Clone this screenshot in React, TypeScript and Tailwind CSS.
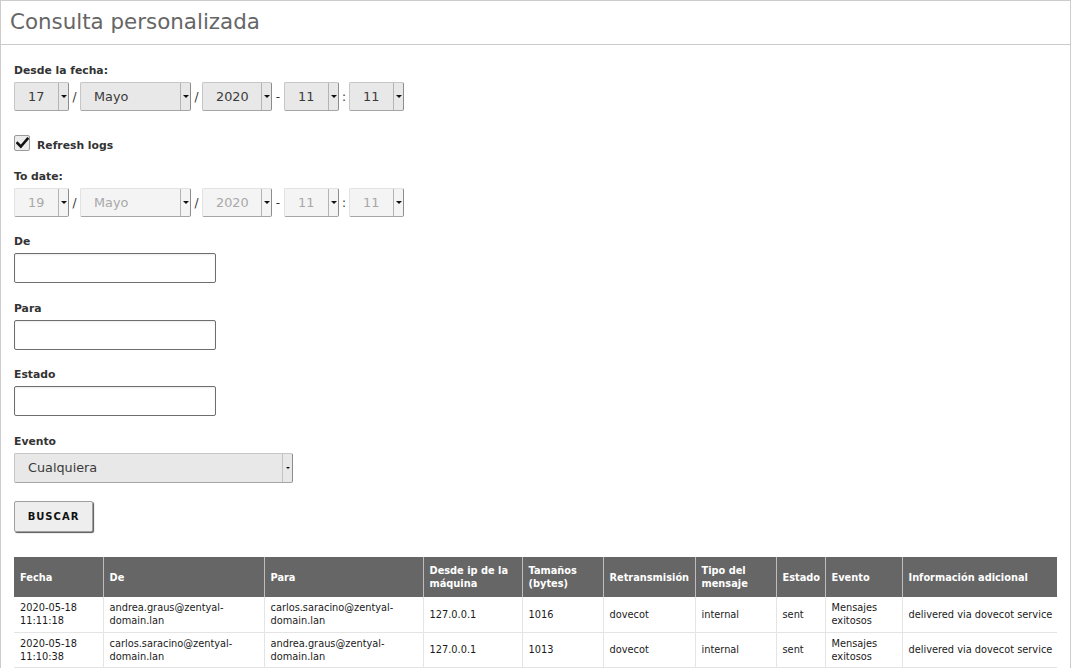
import clsx from "clsx";

type Row = {
  fecha: [string, string];
  de: [string, string];
  para: [string, string];
  ip: string;
  size: string;
  relay: string;
  tipo: string;
  estado: string;
  evento: [string, string];
  info: string;
};

const rows: Row[] = [
  {
    fecha: ["2020-05-18", "11:11:18"],
    de: ["andrea.graus@zentyal-", "domain.lan"],
    para: ["carlos.saracino@zentyal-", "domain.lan"],
    ip: "127.0.0.1",
    size: "1016",
    relay: "dovecot",
    tipo: "internal",
    estado: "sent",
    evento: ["Mensajes", "exitosos"],
    info: "delivered via dovecot service",
  },
  {
    fecha: ["2020-05-18", "11:10:38"],
    de: ["carlos.saracino@zentyal-", "domain.lan"],
    para: ["andrea.graus@zentyal-", "domain.lan"],
    ip: "127.0.0.1",
    size: "1013",
    relay: "dovecot",
    tipo: "internal",
    estado: "sent",
    evento: ["Mensajes", "exitosos"],
    info: "delivered via dovecot service",
  },
];

function Arrow() {
  return (
    <span className="h-0 w-0 border-x-[3px] border-t-[3px] border-x-transparent border-t-[#111]" />
  );
}

function FakeSelect({
  value,
  className,
  disabled,
}: {
  value: string;
  className: string;
  disabled?: boolean;
}) {
  return (
    <div
      className={clsx(
        "flex h-[29px] rounded-[2px] border border-r-[#8c8c8c] border-b-[#a5a5a5]",
        disabled
          ? "border-[#e2e2e2] bg-[#f4f4f4] text-[#a8a8a8]"
          : "border-[#c6c6c6] bg-[#e8e8e8] text-[#3a3a3a]",
        className
      )}
    >
      <div className="flex flex-1 items-center pl-[13px] text-[12.8px]">
        {value}
      </div>
      <div className="flex w-[10px] items-center justify-center border-l border-[#b4b4b4]">
        <Arrow />
      </div>
    </div>
  );
}

function DateRow({ day, disabled }: { day: string; disabled?: boolean }) {
  const sep = "flex items-center justify-center text-[12px] text-[#333]";
  return (
    <div className="flex">
      <FakeSelect value={day} className="w-[55px]" disabled={disabled} />
      <span className={clsx(sep, "w-[11px]")}>/</span>
      <FakeSelect value="Mayo" className="w-[111px]" disabled={disabled} />
      <span className={clsx(sep, "w-[11px]")}>/</span>
      <FakeSelect value="2020" className="w-[70px]" disabled={disabled} />
      <span className={clsx(sep, "w-[12px]")}>-</span>
      <FakeSelect value="11" className="w-[55px]" disabled={disabled} />
      <span className={clsx(sep, "w-[10px]")}>:</span>
      <FakeSelect value="11" className="w-[55px]" disabled={disabled} />
    </div>
  );
}

function Label({ children }: { children: string }) {
  return (
    <div className="mb-[5px] text-[10.8px] font-bold leading-[13px] text-[#333]">
      {children}
    </div>
  );
}

function TextBox() {
  return (
    <div className="h-[30px] w-[202px] rounded-[2px] border border-[#6e6e6e] bg-white shadow-[inset_0_1px_2px_rgba(0,0,0,0.08)]" />
  );
}

export default function App() {
  const headers = [
    "Fecha",
    "De",
    "Para",
    "Desde ip de la máquina",
    "Tamaños (bytes)",
    "Retransmisión",
    "Tipo del mensaje",
    "Estado",
    "Evento",
    "Información adicional",
  ];
  const widths = [
    "w-[89px]",
    "w-[161px]",
    "w-[159px]",
    "w-[99px]",
    "w-[81px]",
    "w-[92px]",
    "w-[81px]",
    "w-[49px]",
    "w-[77px]",
    "w-[155px]",
  ];

  return (
    <div className="min-h-[668px] w-[1071px] bg-white font-['DejaVu_Sans',sans-serif]">
      <div className="min-h-[668px] border border-b-0 border-[#cccccc]">
        <div className="flex h-[44px] items-center border-b border-[#cccccc] px-[9px] text-[21.4px] text-[#666666]">
          Consulta personalizada
        </div>

        <div className="px-[13px]">
          <div className="mt-[19px]">
            <Label>Desde la fecha:</Label>
            <DateRow day="17" />
          </div>

          <div className="mt-[23px] flex h-[17px] items-center gap-[7px]">
            <span className="flex h-[16px] w-[16px] items-center justify-center rounded-[2px] border border-[#9a9a9a] bg-[#ececec]">
              <svg width="13" height="12" viewBox="0 0 13 12">
                <path
                  d="M1.5 6.2 L4.8 9.5 L11.5 1.8"
                  fill="none"
                  stroke="#111"
                  strokeWidth="2.6"
                  strokeLinecap="square"
                />
              </svg>
            </span>
            <span className="mt-[8px] text-[10.8px] font-bold text-[#333]">
              Refresh logs
            </span>
          </div>

          <div className="mt-[19px]">
            <Label>To date:</Label>
            <DateRow day="19" disabled />
          </div>

          <div className="mt-[18px]">
            <Label>De</Label>
            <TextBox />
          </div>
          <div className="mt-[19px]">
            <Label>Para</Label>
            <TextBox />
          </div>
          <div className="mt-[18px]">
            <Label>Estado</Label>
            <TextBox />
          </div>
          <div className="mt-[19px]">
            <Label>Evento</Label>
            <div className="flex h-[30px] w-[279px] rounded-[2px] border border-[#c6c6c6] border-r-[#8c8c8c] border-b-[#a5a5a5] bg-[#e8e8e8]">
              <div className="flex flex-1 items-center pl-[13px] text-[12.8px] text-[#3a3a3a]">
                Cualquiera
              </div>
              <div className="flex w-[10px] items-center justify-center border-l border-[#c4c4c4]">
                <span className="h-0 w-0 border-x-[2px] border-t-[2px] border-x-transparent border-t-[#111]" />
              </div>
            </div>
          </div>

          <button className="mt-[18px] h-[31px] w-[79px] rounded-[2px] border border-[#a0a0a0] bg-[#eeeeee] text-[10px] font-bold tracking-[1px] text-[#111] shadow-[1px_1px_1px_#555]">
            BUSCAR
          </button>

          <table className="mt-[25px] w-[1043px] table-fixed border-collapse text-[9.8px]">
            <colgroup>
              {widths.map((w, i) => (
                <col key={i} className={w} />
              ))}
            </colgroup>
            <thead>
              <tr className="h-[40px] bg-[#666666]">
                {headers.map((h) => (
                  <th
                    key={h}
                    className="border-x border-[#bdbdbd] px-[6px] text-left align-middle font-bold leading-[13px] text-white first:border-l-0 last:border-r-0"
                  >
                    {h}
                  </th>
                ))}
              </tr>
            </thead>
            <tbody>
              {rows.map((r, i) => (
                <tr
                  key={i}
                  className="h-[35px] border-b border-[#e4e4e4] leading-[13px] text-[#1a1a1a]"
                >
                  <td className="border-r border-[#e4e4e4] px-[6px]">
                    {r.fecha[0]}
                    <br />
                    {r.fecha[1]}
                  </td>
                  <td className="border-r border-[#e4e4e4] px-[6px]">
                    {r.de[0]}
                    <br />
                    {r.de[1]}
                  </td>
                  <td className="border-r border-[#e4e4e4] px-[6px]">
                    {r.para[0]}
                    <br />
                    {r.para[1]}
                  </td>
                  <td className="border-r border-[#e4e4e4] px-[6px]">{r.ip}</td>
                  <td className="border-r border-[#e4e4e4] px-[6px]">{r.size}</td>
                  <td className="border-r border-[#e4e4e4] px-[6px]">{r.relay}</td>
                  <td className="border-r border-[#e4e4e4] px-[6px]">{r.tipo}</td>
                  <td className="border-r border-[#e4e4e4] px-[6px]">{r.estado}</td>
                  <td className="border-r border-[#e4e4e4] px-[6px]">
                    {r.evento[0]}
                    <br />
                    {r.evento[1]}
                  </td>
                  <td className="whitespace-nowrap pl-[6px] pr-0">{r.info}</td>
                </tr>
              ))}
            </tbody>
          </table>
        </div>
      </div>
    </div>
  );
}
